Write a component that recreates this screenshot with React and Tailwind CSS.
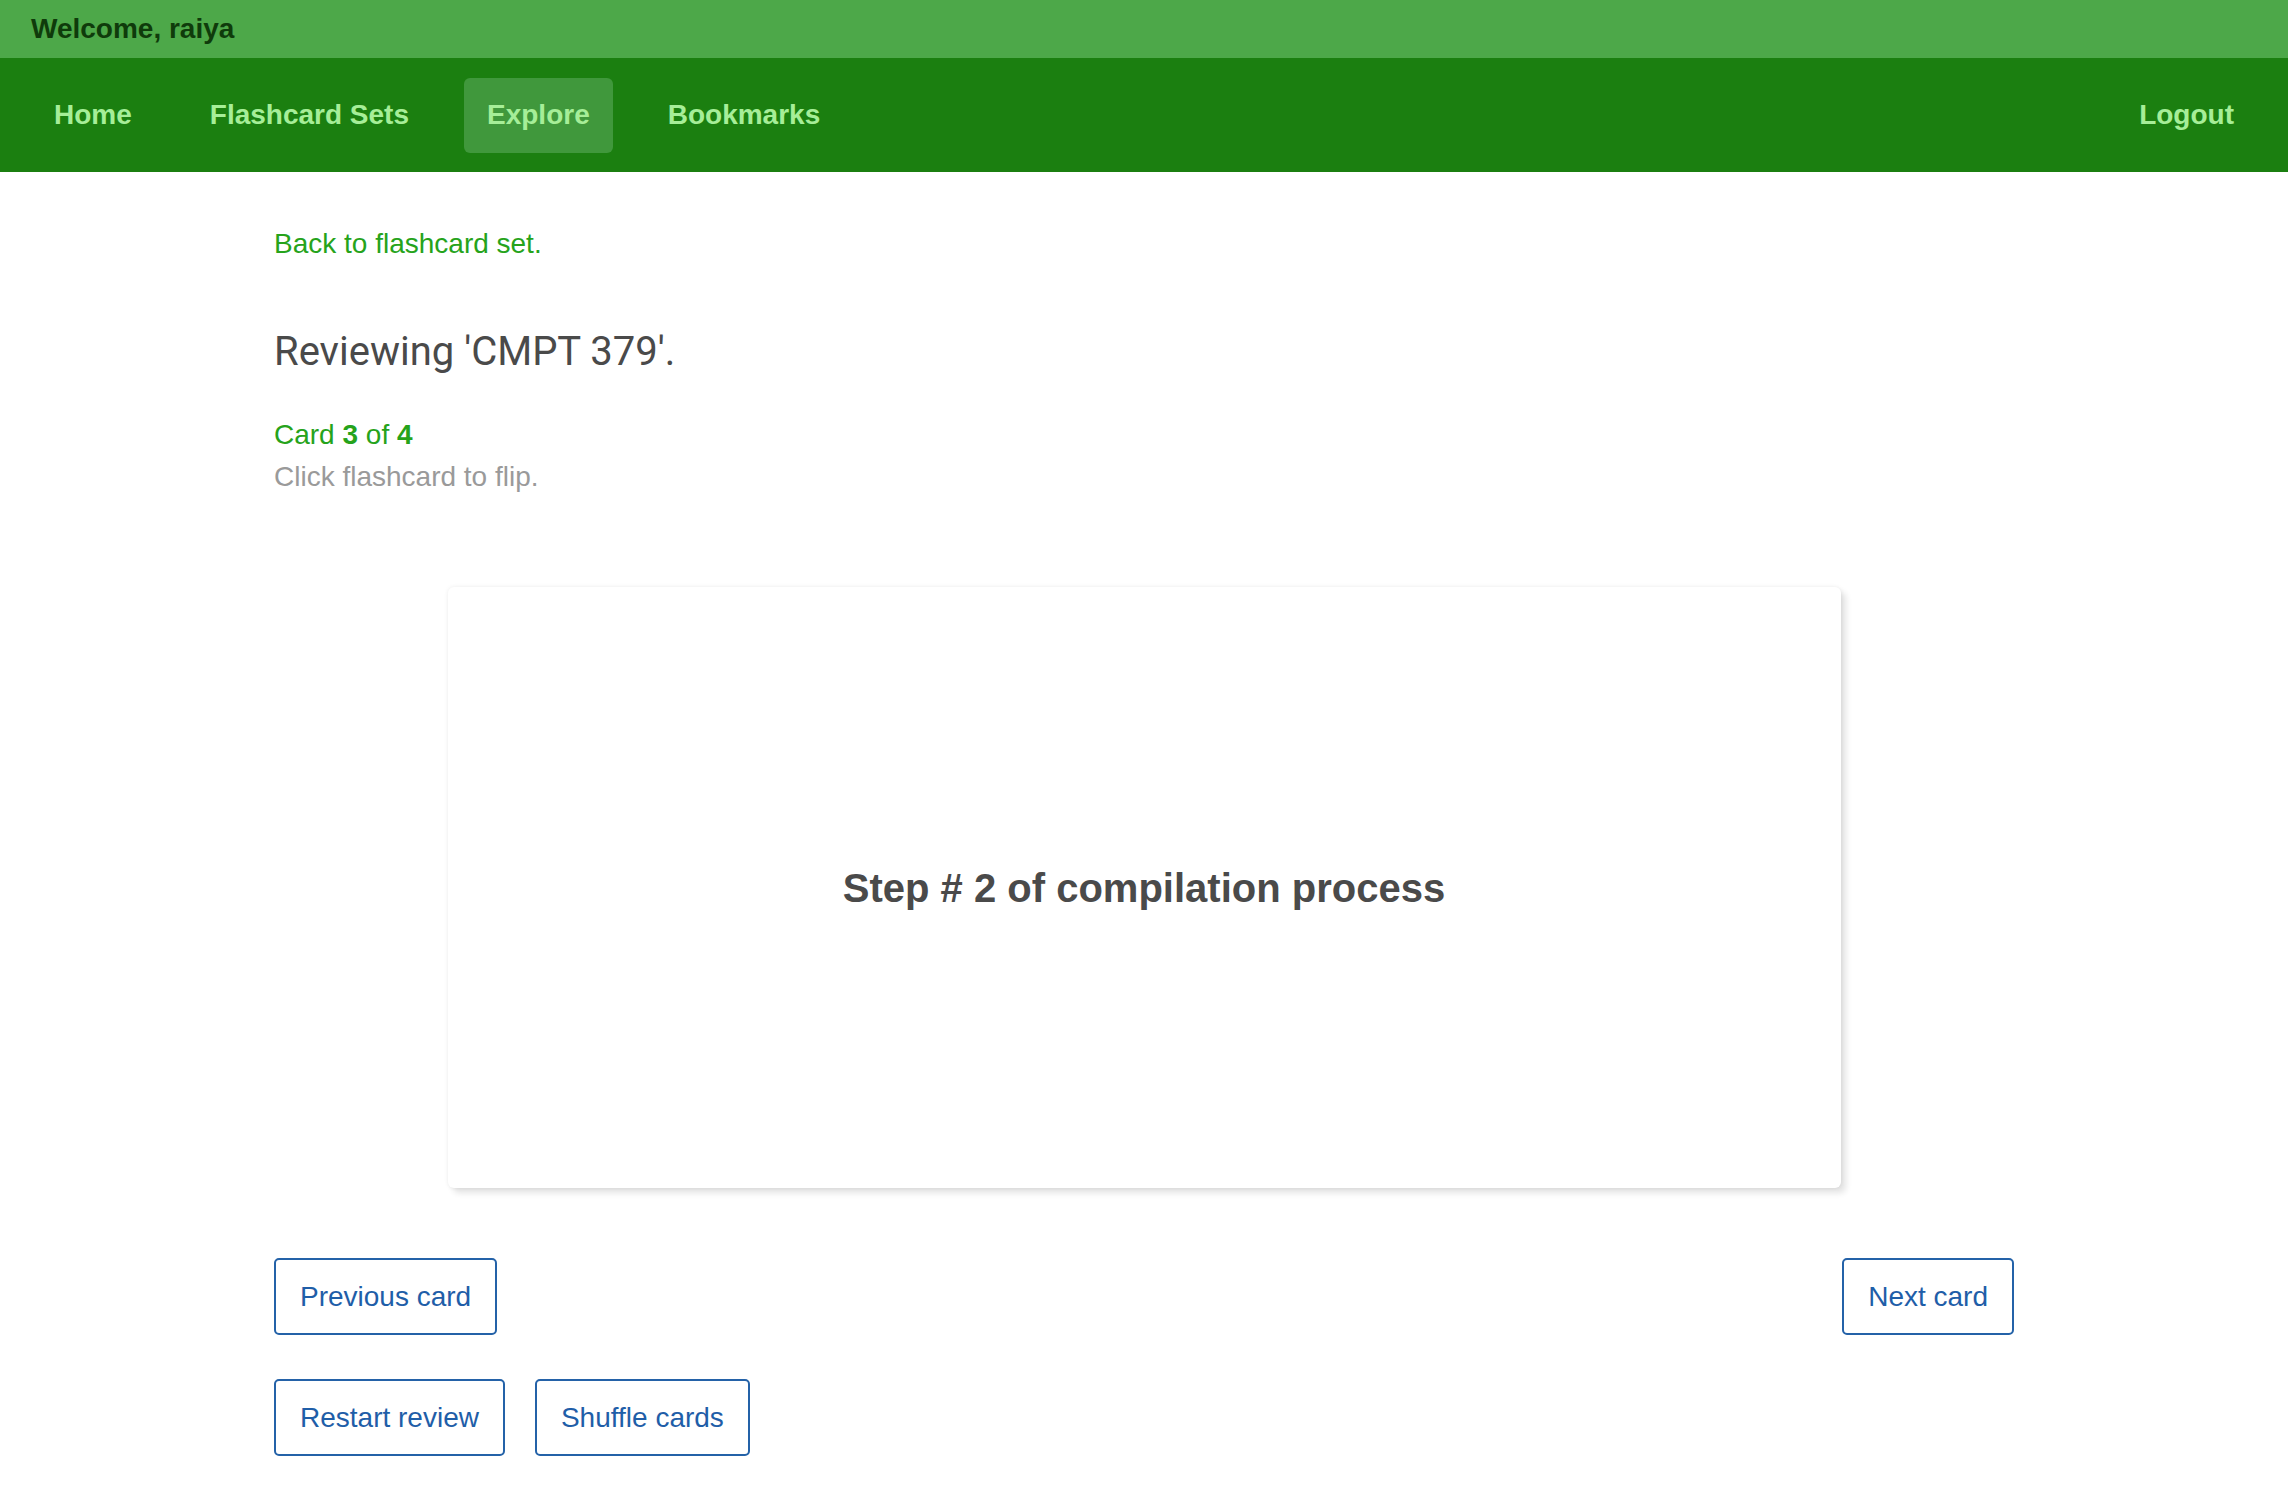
export default function App() {
  const arial = { fontFamily: '"Liberation Sans", Arial, sans-serif' };
  const navItem = "px-[23px] h-[75px] flex items-center rounded-[6px] text-[28px] font-bold text-[#a6ee98]";
  const btn = "border-2 border-[#2462a8] rounded-[5px] px-[24px] py-[20px] leading-[33px] text-[28px] text-[#1f5ea8] bg-white";
  return (
    <div className="min-h-[1506px] bg-white" style={arial}>
      <div className="h-[58px] bg-[#4da849] flex items-center px-[31px]">
        <span className="text-[28px] font-bold text-[#0f3b0b]">Welcome, raiya</span>
      </div>
      <div className="h-[114px] bg-[#1b7f10] flex items-center justify-between px-[31px]">
        <div className="flex items-center gap-[32px]">
          <a className={navItem}>Home</a>
          <a className={navItem}>Flashcard Sets</a>
          <a className={navItem + " bg-[#40983c]"}>Explore</a>
          <a className={navItem}>Bookmarks</a>
        </div>
        <a className={navItem}>Logout</a>
      </div>
      <div className="w-[1740px] mx-auto pt-[51px] pb-[40px]">
        <a className="block text-[28px] leading-[42px] text-[#26a31b]">Back to flashcard set.</a>
        <h1
          className="mt-[63px] text-[40px] leading-[48px] font-normal text-[#4a4a4a]"
          style={{ fontFamily: 'Roboto, "Liberation Sans", sans-serif' }}
        >
          Reviewing 'CMPT 379'.
        </h1>
        <div className="mt-[38px] text-[28px] leading-[42px] text-[#26a31b]">
          Card <b>3</b> of <b>4</b>
        </div>
        <div className="text-[28px] leading-[42px] text-[#9a9a9a]">Click flashcard to flip.</div>
        <div className="mt-[89px] flex justify-center">
          <div className="w-[1393px] h-[601px] bg-white rounded-[6px] flex items-center justify-center shadow-[0_0_4px_rgba(0,0,0,0.08),5px_5px_6px_rgba(0,0,0,0.11)] cursor-pointer">
            <span className="text-[40px] font-bold text-[#4a4a4a]">Step # 2 of compilation process</span>
          </div>
        </div>
        <div className="mt-[70px] flex justify-between">
          <button className={btn}>Previous card</button>
          <button className={btn}>Next card</button>
        </div>
        <div className="mt-[44px] flex gap-[30px]">
          <button className={btn}>Restart review</button>
          <button className={btn}>Shuffle cards</button>
        </div>
      </div>
    </div>
  );
}
